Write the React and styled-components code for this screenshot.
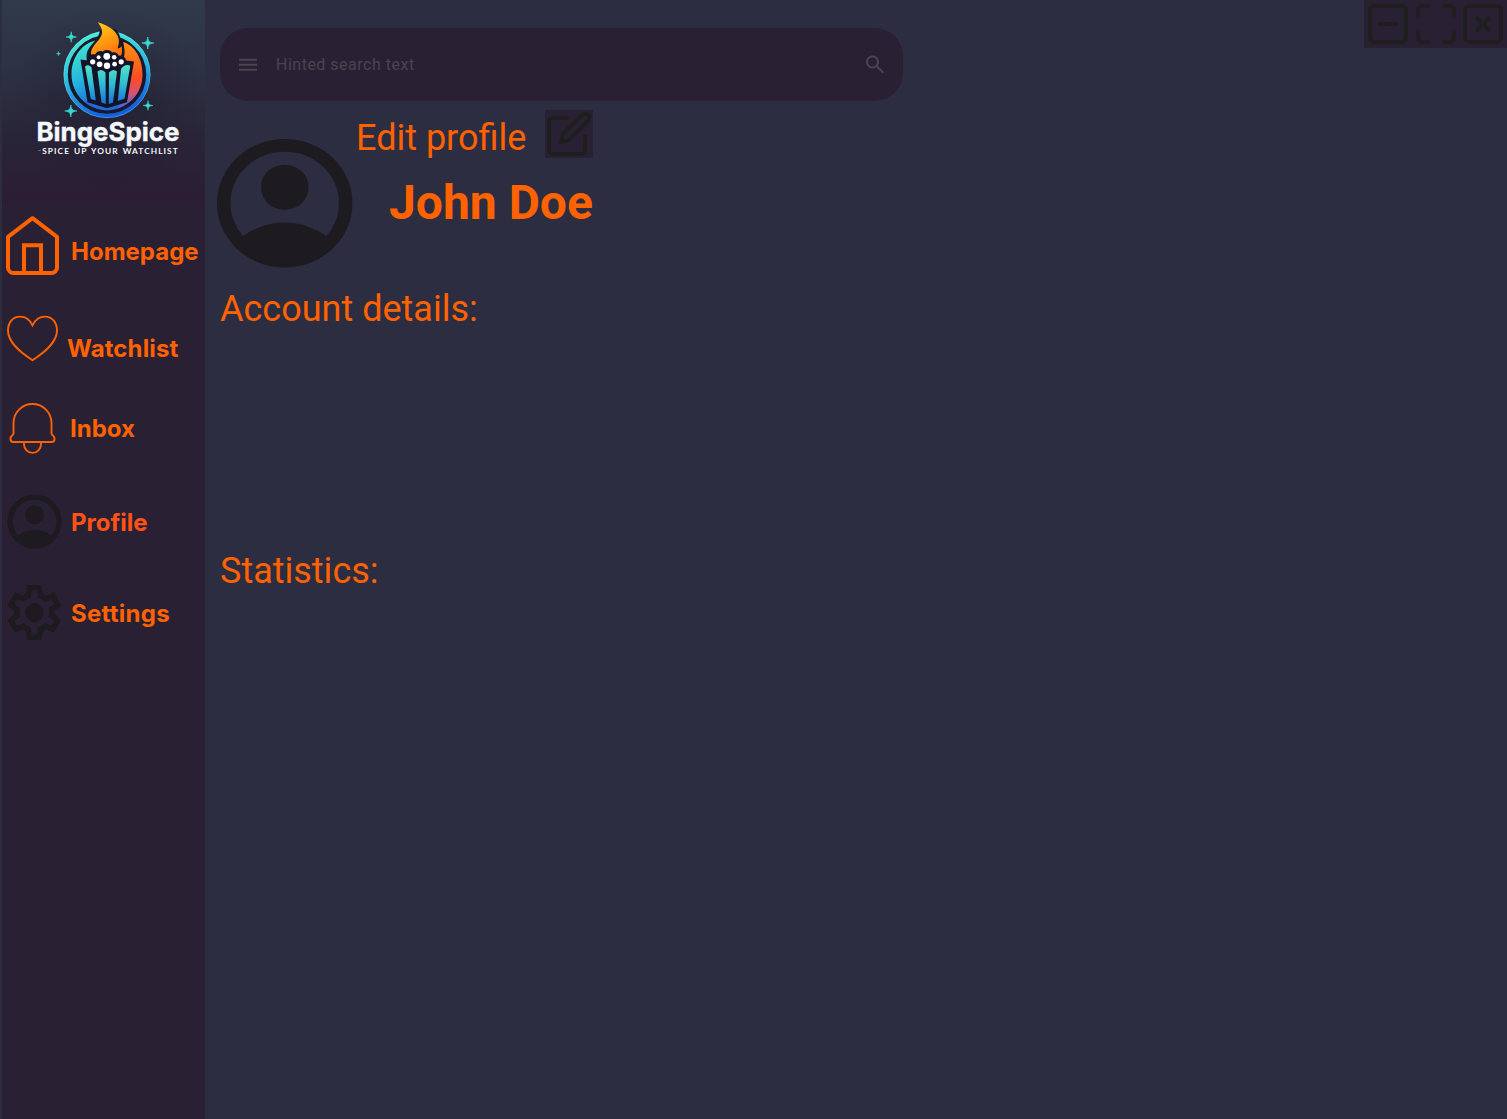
import React from "react";
import styled, { createGlobalStyle } from "styled-components";

const orange = "#ff6200";
const plum = "#2a2034";
const slate = "#2c2d41";

const Global = createGlobalStyle`
  * { box-sizing: border-box; }
  body { margin: 0; background: ${slate}; font-family: Roboto, "Liberation Sans", sans-serif; }
  h1, h2, p { margin: 0; }
`;

const Page = styled.div`
  display: flex;
  width: 1507px;
  height: 1119px;
  padding-left: 2px;
  overflow: hidden;
  background: ${slate};
`;

const Sidebar = styled.aside`
  flex: none;
  width: 203px;
  background: ${plum};
`;

const LogoBox = styled.div`
  width: 203px;
  height: 203px;
  background:
    radial-gradient(circle at 52% 50%, rgba(28, 24, 42, 0.45) 0%, rgba(28, 24, 42, 0) 66%),
    linear-gradient(180deg, #303a4b 0%, #2d3144 36%, #292538 66%, #2b1d34 100%);
  svg { display: block; }
`;

const Nav = styled.nav`
  display: flex;
  flex-direction: column;
`;

const NavItem = styled.a`
  display: flex;
  align-items: flex-start;
  height: ${(p) => p.$height}px;
  color: ${(p) => p.$color || orange};
  font: 700 24px/30px Inter, sans-serif;
  letter-spacing: ${(p) => p.$spacing || 0}px;
`;

const IconSlot = styled.span`
  flex: none;
  display: flex;
  width: ${(p) => p.$width}px;
  padding: ${(p) => p.$top}px 0 0 ${(p) => p.$left}px;
  svg { flex: none; display: block; overflow: visible; }
`;

const NavLabel = styled.span`
  padding-top: ${(p) => p.$top}px;
  white-space: nowrap;
`;

const Main = styled.main`
  flex: 1;
  min-width: 0;
`;

const TopBar = styled.header`
  display: flex;
  justify-content: space-between;
  align-items: flex-start;
  height: 110px;
  padding-left: 15px;
`;

const SearchBar = styled.div`
  display: flex;
  align-items: center;
  width: 683px;
  height: 73px;
  margin-top: 28px;
  padding: 0 16px;
  border-radius: 28px;
  background: ${plum};
  color: #49454f;
  svg { flex: none; display: block; }
`;

const Hint = styled.span`
  flex: 1;
  padding-left: 16px;
  font-size: 16px;
  line-height: 24px;
  letter-spacing: 0.5px;
`;

const WindowControls = styled.div`
  display: flex;
  width: 143px;
  height: 48px;
  background: ${plum};
`;

const ControlButton = styled.span`
  display: block;
  width: ${(p) => p.$width}px;
  height: 48px;
`;

const ProfileHeader = styled.section`
  display: flex;
  height: 178px;
  padding-left: 12px;
`;

const Avatar = styled.div`
  width: 136px;
  padding-top: 28.5px;
  svg { display: block; }
`;

const Identity = styled.div`
  display: flex;
  flex-direction: column;
  padding-left: 3px;
`;

const EditRow = styled.div`
  display: flex;
  height: 48px;
  width: 237px;
  justify-content: space-between;
`;

const EditButton = styled.span`
  width: 48px;
  height: 48px;
  background: ${plum};
`;

const Heading = styled.h2`
  color: ${orange};
  font-weight: 400;
  font-size: 36px;
  line-height: 42px;
  padding-top: ${(p) => p.$top || 0}px;
  white-space: nowrap;
`;

const Name = styled.h1`
  padding: 17px 0 0 33px;
  color: ${orange};
  font-weight: 700;
  font-size: 48px;
  line-height: 56px;
  white-space: nowrap;
`;

const Section = styled.section`
  height: ${(p) => p.$height}px;
  padding-left: 15px;
`;

const Feather = ({ children }) => (
  <svg width="48" height="48" viewBox="0 0 24 24" fill="none" stroke="#1e1e1e" strokeWidth="2" strokeLinecap="round" strokeLinejoin="round">
    {children}
  </svg>
);

const AccountIcon = ({ width, height, shift = 0 }) => (
  <svg width={width} height={height} viewBox={`${80 - shift} ${-880 - shift} 800 800`} preserveAspectRatio="none" overflow="visible" fill="#1d1b20" fillRule="evenodd">
    <path d="M234-276q51-39 114-61.5T480-360q69 0 132 22.5T726-276q35-41 54.5-93T800-480q0-133-93.5-226.5T480-800q-133 0-226.5 93.5T160-480q0 59 19.5 111t54.5 93Zm246-164q-59 0-99.5-40.5T340-580q0-59 40.5-99.5T480-720q59 0 99.5 40.5T620-580q0 59-40.5 99.5T480-440Zm0 360q-83 0-156-31.5T197-197q-54-54-85.5-127T80-480q0-83 31.5-156T197-763q54-54 127-85.5T480-880q83 0 156 31.5T763-763q54 54 85.5 127T880-480q0 83-31.5 156T763-197q-54 54-127 85.5T480-80Z" />
  </svg>
);

const HomeIcon = () => (
  <svg width="53" height="59" viewBox="6 216 53 59" fill="none" stroke={orange} strokeWidth="4" strokeLinejoin="round">
    <path d="M32.5 218.2 8 236.8V267.5a5.5 5.5 0 0 0 5.5 5.5h38a5.5 5.5 0 0 0 5.5-5.5V236.8Z" />
    <path d="M24 272.5V245.3H41V272.5" strokeLinejoin="miter" />
  </svg>
);

const HeartIcon = () => (
  <svg width="51" height="46" viewBox="7 315 51 46" fill="none" stroke={orange} strokeWidth="1.9">
    <path d="M32.5 325.3C35 320 39.5 316.6 45 316.6C52.3 316.6 57 322.7 57 330.5C57 343 43.5 353 32.5 360.2C21.5 353 8 343 8 330.5C8 322.7 12.7 316.6 20 316.6C25.5 316.6 30 320 32.5 325.3Z" />
  </svg>
);

const BellIcon = () => (
  <svg width="47" height="52" viewBox="9 402 47 52" fill="none" stroke={orange} strokeWidth="1.9" strokeLinejoin="round">
    <path d="M13.500 433.500V423a19 19 0 0 1 38 0V433.500c0 2 3 1.800 3 5.500 0 2-1.200 3-2.700 3H13.200c-1.500 0-2.700-1-2.700-3 0-3.700 3-3.500 3-5.500Z" />
    <path d="M24 442v2.300a8.500 8.600 0 0 0 17 0v-2.300" />
  </svg>
);

const GearIcon = () => (
  <svg width="54" height="55" viewBox="73 -880 804 800" preserveAspectRatio="none" fill="#1d1b20" fillRule="evenodd">
    <path d="m370-80-16-128q-13-5-24.5-12T307-235l-119 50L78-375l103-78q-1-7-1-13.5v-27q0-6.5 1-13.5L78-585l110-190 119 50q11-8 23-15t24-12l16-128h220l16 128q13 5 24.5 12t22.5 15l119-50 110 190-103 78q1 7 1 13.5v27q0 6.5-2 13.5l103 78-110 190-118-50q-11 8-23 15t-24 12L590-80H370Zm70-80h79l14-106q31-8 57.5-23.5T639-327l99 41 39-68-86-65q5-14 7-29.5t2-31.5q0-16-2-31.5t-7-29.5l86-65-39-68-99 42q-22-23-48.5-38.5T533-694l-13-106h-79l-14 106q-31 8-57.5 23.5T321-633l-99-41-39 68 86 64q-5 15-7 30t-2 32q0 16 2 31t7 30l-86 65 39 68 99-42q22 23 48.5 38.5T427-266l13 106Zm42-180q58 0 99-41t41-99q0-58-41-99t-99-41q-59 0-99.5 41T342-480q0 58 40.5 99t99.5 41Z" />
  </svg>
);

const Sparkle = ({ x, y, r }) => (
  <path
    transform={`translate(${x} ${y}) scale(${r})`}
    d="M0-1C.1-.25.25-.1 1 0C.25.1.1.25 0 1C-.1.25-.25.1-1 0C-.25-.1-.1-.25 0-1Z"
    fill="#35d9cf"
    stroke="#35d9cf"
    strokeWidth=".12"
  />
);

const kernels = [
  [92.7, 61.8, 2.6], [99.6, 64.3, 2.8], [107, 65.8, 3.2], [114.6, 64.2, 2.4], [121.2, 61.8, 2.6],
  [98.6, 57.2, 2], [106.8, 56.3, 3.4], [114.2, 57.3, 2.3],
];

const Logo = () => (
  <svg width="203" height="203" viewBox="2 0 203 203">
    <defs>
      <linearGradient id="ring" x1=".1" y1="0" x2=".4" y2="1">
        <stop offset="0" stopColor="#4ff0d4" />
        <stop offset=".5" stopColor="#2cbfe0" />
        <stop offset="1" stopColor="#1560dc" />
      </linearGradient>
      <linearGradient id="cool" x1=".2" y1="0" x2=".5" y2="1">
        <stop offset="0" stopColor="#43ecc9" />
        <stop offset=".55" stopColor="#24b4de" />
        <stop offset="1" stopColor="#1d62dd" />
      </linearGradient>
      <linearGradient id="hot" x1="0" y1="0" x2="0" y2="1">
        <stop offset="0" stopColor="#ff9410" />
        <stop offset=".55" stopColor="#ff4a24" />
        <stop offset=".78" stopColor="#d2527c" />
        <stop offset="1" stopColor="#3867da" />
      </linearGradient>
      <linearGradient id="flame" x1="0" y1="0" x2=".4" y2="1">
        <stop offset="0" stopColor="#ffcf26" />
        <stop offset=".5" stopColor="#ffa511" />
        <stop offset="1" stopColor="#ff7411" />
      </linearGradient>
      <linearGradient id="stripe" gradientUnits="userSpaceOnUse" x1="0" y1="64" x2="0" y2="104">
        <stop offset="0" stopColor="#52e6c8" />
        <stop offset=".5" stopColor="#2fbcd2" />
        <stop offset="1" stopColor="#1a6fdc" />
      </linearGradient>
    </defs>
    <circle cx="107" cy="74.5" r="43.6" fill="#17182c" />
    <circle cx="107" cy="74.5" r="41.3" fill="none" stroke="url(#ring)" strokeWidth="4.2" />
    <circle cx="107" cy="74.5" r="43.2" fill="none" stroke="#8cf5ee" strokeWidth=".6" opacity=".6" />
    <path d="M97 40C82 43 71.5 57 71.5 74.5C71.5 94 87 110 107 110L107 100C96 92 82 60 88 50C90 46 93 43 97 40Z" fill="url(#cool)" />
    <path d="M85 101C91 107 99 110.5 107 110.5C115 110.5 124 107 129 100Z" fill="#2267dc" />
    <path d="M123.3 42C136 46 142.5 60 142.5 74.5C142.5 92 131 104 118 108.5C130 90 127 72 119 55C123 52 124.5 48 123.3 42Z" fill="url(#hot)" />
    <path d="M99.5 29.5C101 35 94 41 90.5 47C87.5 52 87 56 88.5 61H122C127 54 124 43 120.5 39C119.5 34 118 31 115 29Z" fill="#17182c" />
    <path d="M97.7 22.3C106 24.5 118.7 31 118.9 40.5C119 44 118 46.5 117.5 48.5C119.5 48.5 121 47 121.5 46C123 52 121.5 56 119 58H92C89.5 52 92 47.5 96.5 42.5C101.5 37 105.5 32 97.7 22.3Z" fill="url(#flame)" />
    <path d="M80.5 59.5 88 60.5C87 56.5 91 53.5 95 54.5C97 50.5 101 50.5 103 51.5C106 49 111 50 112 52.5C115 51.5 118 53 118.5 55.5C123 55.5 126 57.5 126 60.5L134 61.5 127 102.2 107 108.2 87.5 102.2Z" fill="#141428" />
    <g fill="url(#stripe)">
      <path d="M85 66.5Q88.5 63.5 91.5 67.5L95.8 100.5 90.8 99Z" />
      <path d="M97.5 71.5Q101.5 68 105.5 72.5L105.8 104 101.5 102.6Z" />
      <path d="M109 72.5Q113 68 117 71.5L113 102.6 108.8 104Z" />
      <path d="M121 69Q125 63.5 130.3 65.8L124.5 98.8 117.8 101Z" />
    </g>
    {kernels.map(([x, y, r]) => (
      <circle key={`${x}-${y}`} cx={x} cy={y} r={r} fill="#fff" />
    ))}
    <Sparkle x={71.2} y={37} r={5.2} />
    <Sparkle x={147.8} y={43} r={6} />
    <Sparkle x={58.5} y={53.7} r={2.4} />
    <Sparkle x={70.8} y={111} r={6} />
    <Sparkle x={148} y={105.5} r={4.8} />
    <text x="36.4" y="141.3" textLength="143" lengthAdjust="spacingAndGlyphs" fill="#f4f9fc" stroke="#f4f9fc" strokeWidth=".4" fontFamily="Inter, sans-serif" fontWeight="700" fontSize="25.4">BingeSpice</text>
    <path d="M38 150.5h3" stroke="#63738a" strokeWidth=".8" />
    <text x="42.2" y="153.9" textLength="135.5" wordSpacing="1" fill="#f4f9fc" fontFamily="Lato, sans-serif" fontWeight="700" fontSize="8.3">SPICE UP YOUR WATCHLIST</text>
  </svg>
);

export default function App() {
  return (
    <Page>
      <Global />
      <Sidebar>
        <LogoBox><Logo /></LogoBox>
        <Nav>
          <NavItem $height={97}>
            <IconSlot $width={69} $left={4} $top={13}><HomeIcon /></IconSlot>
            <NavLabel $top={34}>Homepage</NavLabel>
          </NavItem>
          <NavItem $height={90} $spacing={0.12}>
            <IconSlot $width={65} $left={5} $top={15}><HeartIcon /></IconSlot>
            <NavLabel $top={34}>Watchlist</NavLabel>
          </NavItem>
          <NavItem $height={90}>
            <IconSlot $width={68} $left={7} $top={12}><BellIcon /></IconSlot>
            <NavLabel $top={24}>Inbox</NavLabel>
          </NavItem>
          <NavItem $height={90} $color="#ff5316">
            <IconSlot $width={69} $left={5} $top={14}><AccountIcon width={54.4} height={54.4} shift={6} /></IconSlot>
            <NavLabel $top={28}>Profile</NavLabel>
          </NavItem>
          <NavItem $height={90} $spacing={0.26}>
            <IconSlot $width={69} $left={5} $top={15}><GearIcon /></IconSlot>
            <NavLabel $top={29}>Settings</NavLabel>
          </NavItem>
        </Nav>
      </Sidebar>
      <Main>
        <TopBar>
          <SearchBar>
            <svg width="24" height="24" viewBox="0 .35 24 24" fill="currentColor"><path d="M3 18v-2h18v2H3Zm0-5v-2h18v2H3Zm0-5V6h18v2H3Z" /></svg>
            <Hint>Hinted search text</Hint>
            <svg width="24" height="24" viewBox="0 .5 24 24" fill="currentColor"><path d="m19.6 21-6.3-6.3A6.096 6.096 0 0 1 9.5 16c-1.817 0-3.354-.63-4.612-1.888C3.629 12.854 3 11.317 3 9.5s.63-3.354 1.888-4.612C6.146 3.629 7.683 3 9.5 3s3.354.63 4.613 1.888C15.37 6.146 16 7.683 16 9.5a6.096 6.096 0 0 1-1.3 3.8l6.3 6.3-1.4 1.4ZM9.5 14c1.25 0 2.313-.438 3.188-1.313C13.562 11.813 14 10.75 14 9.5s-.438-2.313-1.313-3.188C11.813 5.438 10.75 5 9.5 5s-2.313.438-3.188 1.313S5 8.25 5 9.5s.438 2.313 1.313 3.188C7.188 13.562 8.25 14 9.5 14Z" /></svg>
          </SearchBar>
          <WindowControls>
            <ControlButton $width={48}><Feather><rect x="3" y="3" width="18" height="18" rx="2" /><path d="M8 12h8" /></Feather></ControlButton>
            <ControlButton $width={47}><Feather><path d="M8 3H5a2 2 0 0 0-2 2v3m18 0V5a2 2 0 0 0-2-2h-3m0 18h3a2 2 0 0 0 2-2v-3M3 16v3a2 2 0 0 0 2 2h3" /></Feather></ControlButton>
            <ControlButton $width={48}><Feather><rect x="3" y="3" width="18" height="18" rx="2" /><path d="m9 9 6 6m0-6-6 6" /></Feather></ControlButton>
          </WindowControls>
        </TopBar>
        <ProfileHeader>
          <Avatar><AccountIcon width={135.5} height={128.5} /></Avatar>
          <Identity>
            <EditRow>
              <Heading $top={7}>Edit profile</Heading>
              <EditButton>
                <Feather>
                  <path d="M11 4H4a2 2 0 0 0-2 2v14a2 2 0 0 0 2 2h14a2 2 0 0 0 2-2v-7" />
                  <path d="M18.5 2.5a2.121 2.121 0 0 1 3 3L12 15l-4 1 1-4 9.5-9.5z" />
                </Feather>
              </EditButton>
            </EditRow>
            <Name>John Doe</Name>
          </Identity>
        </ProfileHeader>
        <Section $height={262}><Heading>Account details:</Heading></Section>
        <Section $height={262}><Heading>Statistics:</Heading></Section>
      </Main>
    </Page>
  );
}
